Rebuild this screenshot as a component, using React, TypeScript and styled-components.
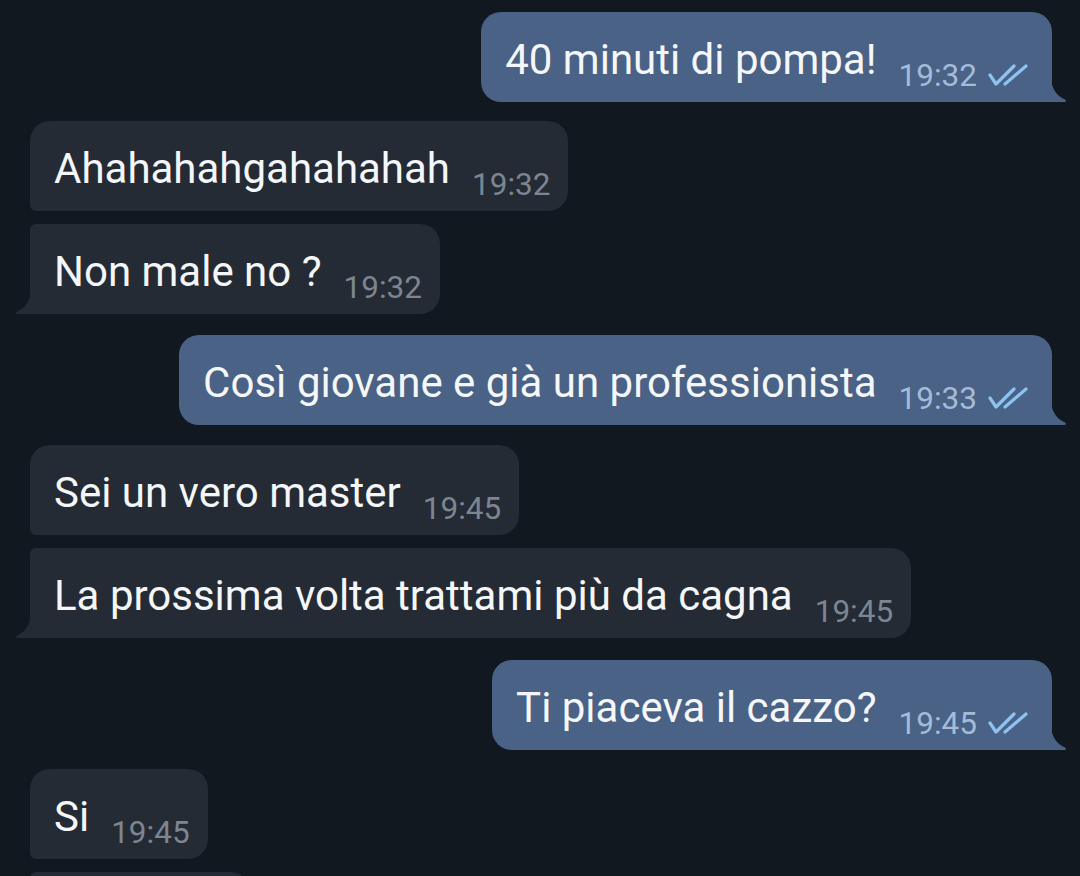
import React from "react";
import styled, { createGlobalStyle, css } from "styled-components";

const Global = createGlobalStyle`
  html, body { margin: 0; padding: 0; background: #12181f; overflow: hidden; }
  body { font-family: Roboto, "Noto Sans", sans-serif; -webkit-font-smoothing: antialiased; }
`;

type Side = "in" | "out";
type Pos = "first" | "last" | "single";

interface Msg {
  side: Side;
  text?: string;
  time?: string;
  pos: Pos;
  gap: number;
  width?: number;
}

const messages: Msg[] = [
  { side: "out", text: "40 minuti di pompa!", time: "19:32", pos: "single", gap: 12 },
  { side: "in", text: "Ahahahahgahahahah", time: "19:32", pos: "first", gap: 19 },
  { side: "in", text: "Non male no ?", time: "19:32", pos: "last", gap: 13 },
  { side: "out", text: "Così giovane e già un professionista", time: "19:33", pos: "single", gap: 21 },
  { side: "in", text: "Sei un vero master", time: "19:45", pos: "first", gap: 20 },
  { side: "in", text: "La prossima volta trattami più da cagna", time: "19:45", pos: "last", gap: 13 },
  { side: "out", text: "Ti piaceva il cazzo?", time: "19:45", pos: "single", gap: 22 },
  { side: "in", text: "Si", time: "19:45", pos: "first", gap: 19 },
  { side: "in", pos: "last", gap: 13, width: 220 },
];

const Chat = styled.div`
  display: flex;
  flex-direction: column;
  padding: 0 28px 0 30px;
  width: 1080px;
  height: 876px;
  box-sizing: border-box;
  overflow: hidden;
`;

const Row = styled.div<{ $side: Side; $gap: number }>`
  display: flex;
  justify-content: ${(p) => (p.$side === "out" ? "flex-end" : "flex-start")};
  margin-top: ${(p) => p.$gap}px;
  flex-shrink: 0;
`;

const radii = (side: Side, pos: Pos) => {
  const big = 20;
  const small = 6;
  if (side === "out") {
    return `${big}px ${big}px 0 ${big}px`;
  }
  if (pos === "first") return `${big}px ${big}px ${big}px ${small}px`;
  if (pos === "last") return `${small}px ${big}px ${big}px 0`;
  return `${big}px ${big}px ${big}px 0`;
};

const Bubble = styled.div<{ $side: Side; $pos: Pos; $width?: number }>`
  position: relative;
  height: 90px;
  box-sizing: border-box;
  padding: 24px ${(p) => (p.$side === "out" ? 22 : 18)}px 0 24px;
  border-radius: ${(p) => radii(p.$side, p.$pos)};
  background: ${(p) => (p.$side === "out" ? "#4a6285" : "#242b35")};
  white-space: nowrap;
  ${(p) => p.$width && `width: ${p.$width}px;`}
`;

const Text = styled.span`
  font-size: 42px;
  line-height: 47px;
  color: #f4f6f8;
`;

const Meta = styled.span<{ $side: Side }>`
  display: inline-flex;
  align-items: baseline;
  vertical-align: -12px;
  margin-left: 22px;
  font-size: 31.5px;
  line-height: 36px;
  color: ${(p) => (p.$side === "out" ? "#a4bcd9" : "#7c8590")};
`;

const Checks = styled.svg`
  width: 44px;
  height: 24px;
  margin-left: 9px;
  align-self: flex-end;
  margin-bottom: 6px;
`;

const Tail = styled.svg<{ $side: Side }>`
  position: absolute;
  bottom: 0;
  width: 16px;
  height: 26px;
  ${(p) =>
    p.$side === "out"
      ? css`
          right: -15px;
          transform: scaleX(-1);
        `
      : css`
          left: -15px;
        `}
`;

const DoubleCheck = () => (
  <Checks viewBox="0 0 44 24" fill="none" stroke="#8cc3f2" strokeWidth="3.2" strokeLinecap="round" strokeLinejoin="round">
    <path d="M4 11 L10 20 L28 2" />
    <path d="M19 20 L40 2" />
  </Checks>
);

const TailShape = ({ side }: { side: Side }) => (
  <Tail $side={side} viewBox="0 0 16 26">
    <path d="M16 0 C16 13 10 20 2 23.5 Q0 24.6 2 26 L16 26 Z" fill={side === "out" ? "#4a6285" : "#242b35"} />
  </Tail>
);

export default function App() {
  return (
    <>
      <Global />
      <Chat>
        {messages.map((m, i) => (
          <Row key={i} $side={m.side} $gap={m.gap}>
            <Bubble $side={m.side} $pos={m.pos} $width={m.width}>
              {m.text && <Text>{m.text}</Text>}
              {m.time && (
                <Meta $side={m.side}>
                  {m.time}
                  {m.side === "out" && <DoubleCheck />}
                </Meta>
              )}
              {(m.side === "out" || m.pos === "last") && <TailShape side={m.side} />}
            </Bubble>
          </Row>
        ))}
      </Chat>
    </>
  );
}
